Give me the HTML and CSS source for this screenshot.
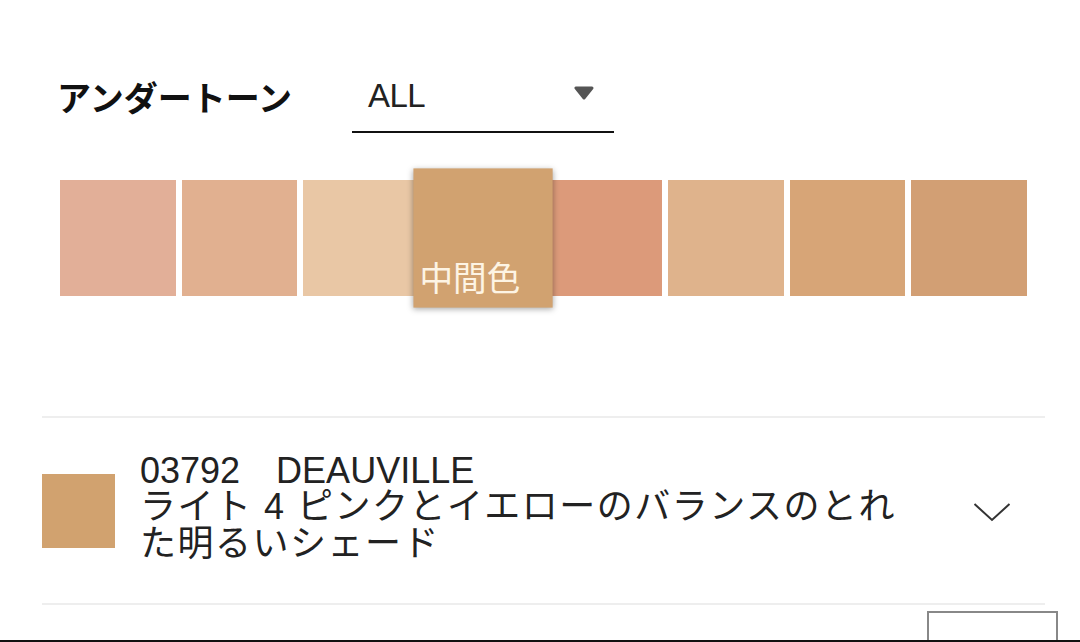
FILE: index.html
```html
<!DOCTYPE html>
<html lang="ja">
<head>
<meta charset="utf-8">
<title>アンダートーン</title>
<link rel="stylesheet" href="styles.css">
</head>
<body>
<main class="shade-finder">
  <div class="filter">
    <span class="filter-label">アンダートーン</span>
    <div class="select">
      <span class="select-value">ALL</span>
      <svg class="select-caret" width="20" height="14" viewBox="0 0 20 14" aria-hidden="true">
        <polygon points="2,2 18,2 10,12" fill="#555" stroke="#555" stroke-width="3" stroke-linejoin="round"/>
      </svg>
    </div>
  </div>

  <div class="swatches">
    <div class="swatch" style="background:#e2af98"></div>
    <div class="swatch" style="background:#e1b090"></div>
    <div class="swatch" style="background:#e9c7a5"></div>
    <div class="swatch swatch-active" style="background:#d1a270"><span class="swatch-label">中間色</span></div>
    <div class="swatch" style="background:#dc9a7a"></div>
    <div class="swatch" style="background:#dfb38c"></div>
    <div class="swatch" style="background:#d7a577"></div>
    <div class="swatch" style="background:#d29f74"></div>
  </div>

  <div class="product">
    <div class="product-chip" style="background:#d1a26f"></div>
    <div class="product-text">
      <div class="product-code">03792　DEAUVILLE</div>
      <div class="product-desc">ライト 4 ピンクとイエローのバランスのとれた明るいシェード</div>
    </div>
    <svg class="product-toggle" width="38" height="20" viewBox="0 0 38 20" aria-hidden="true">
      <polyline points="1.5,2 19,18 36.5,2" fill="none" stroke="#333" stroke-width="2"/>
    </svg>
  </div>
</main>

<div class="next-row">
  <div class="next-box"></div>
</div>
<div class="bottom-edge"></div>
</body>
</html>
```

FILE: styles.css
```css
html, body {
  margin: 0;
  padding: 0;
  background: #fff;
  overflow: hidden;
}

body {
  font-family: "Liberation Sans", "Noto Sans CJK JP", sans-serif;
  color: #222;
  height: 642px;
}

.shade-finder {
  margin: 0 35px 0 42px;
  padding-top: 60px;
}

/* undertone filter */
.filter {
  display: flex;
  align-items: center;
  padding-left: 15px;
  height: 73px;
}

.filter-label {
  font-family: "Noto Sans CJK JP", sans-serif;
  font-weight: 700;
  font-size: 34px;
  color: #111;
  width: 295px;
}

.select {
  box-sizing: border-box;
  width: 262px;
  height: 73px;
  border-bottom: 2px solid #111;
  display: flex;
  align-items: center;
  justify-content: space-between;
  padding: 0 20px 0 16px;
}

.select-value {
  font-size: 33px;
  color: #222;
  letter-spacing: -0.5px;
}

.select-caret {
  margin-top: -6px;
}

/* shade swatches */
.swatches {
  display: flex;
  gap: 6px;
  margin-top: 47px;
  padding: 0 18px;
}

.swatch {
  flex: 1 1 0;
  height: 116px;
  position: relative;
}

.swatch-active {
  transform: scale(1.2);
  z-index: 1;
  box-shadow: 0 1px 5px rgba(0, 0, 0, 0.35);
}

.swatch-label {
  position: absolute;
  left: 5px;
  bottom: 12px;
  font-family: "Noto Sans CJK JP", sans-serif;
  font-size: 28px;
  line-height: 1;
  color: #fdf4e4;
}

/* selected product */
.product {
  margin-top: 120px;
  border-top: 2px solid #eeeeee;
  border-bottom: 2px solid #eeeeee;
  height: 185px;
  display: flex;
  align-items: center;
}

.product-chip {
  width: 73px;
  height: 74px;
  flex: none;
}

.product-text {
  width: 770px;
  margin: -6px 0 0 25px;
  font-family: "Liberation Sans", "Noto Sans CJK JP", sans-serif;
  color: #222;
}

.product-code {
  font-size: 36px;
  line-height: 34px;
}

.product-desc {
  font-size: 36px;
  line-height: 37px;
  letter-spacing: 1.5px;
}

.product-toggle {
  margin-left: auto;
  margin-right: 34px;
  margin-top: 2px;
}

/* start of the next row */
.next-row {
  display: flex;
  justify-content: flex-end;
  padding-top: 6px;
  margin-right: 22px;
}

.next-box {
  box-sizing: border-box;
  width: 131px;
  height: 60px;
  border: 2px solid #888;
}

.bottom-edge {
  position: fixed;
  left: 0;
  right: 0;
  bottom: 0;
  height: 2px;
  background: #111;
}
```
